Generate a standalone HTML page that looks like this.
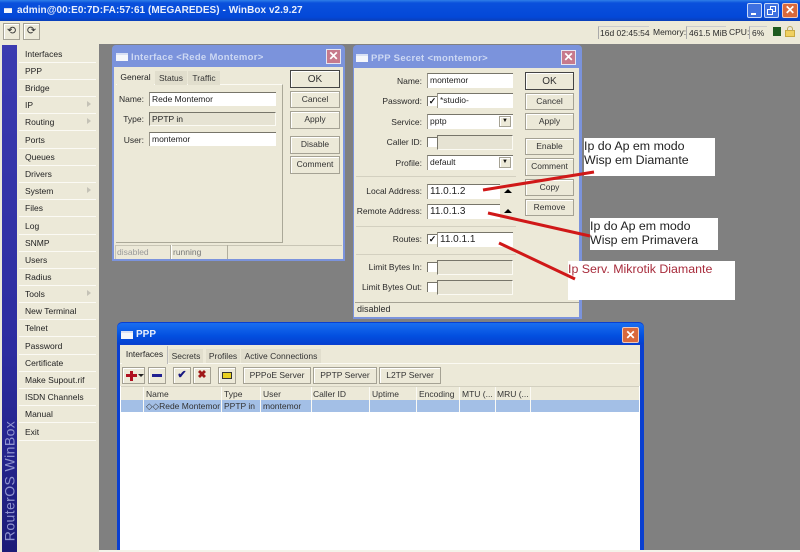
<!DOCTYPE html>
<html><head><meta charset="utf-8">
<style>
html,body{margin:0;padding:0}
body{width:800px;height:552px;overflow:hidden;position:relative;background:#ece9d8;font:8.5px "Liberation Sans",sans-serif;color:#222}
#w{left:0;top:0;width:800px;height:552px;filter:blur(.35px);overflow:hidden}
div{position:absolute;box-sizing:border-box}
.t{white-space:nowrap;font-size:8.5px;line-height:12px;color:#2a2a2a}
.r{text-align:right}
.m{left:25px;font-size:8.5px;line-height:12px;white-space:nowrap;color:#222}
.ms{left:19px;width:77px;height:1px;background:#fbfaf4}
.btn{background:#ece9d8;border:1px solid #a5a294;box-shadow:inset 1px 1px 0 #fff;text-align:center;font-size:8.5px;line-height:15px;color:#333}
.in{background:#fff;border-top:1px solid #77756a;border-left:1px solid #99968a;font-size:8.5px;line-height:13px;padding-left:2px;color:#222;white-space:nowrap}
.dis{background:#e6e3d3;border-top:1px solid #77756a;border-left:1px solid #77756a;border-bottom:1px solid #fbfaf3;border-right:1px solid #fbfaf3}
.cb{width:10px;height:10px;background:#fff;border-top:1px solid #77756a;border-left:1px solid #77756a;font-size:9px;line-height:9px;color:#111;text-align:center;font-weight:bold}
.tri{width:0;height:0;border-left:4px solid transparent;border-right:4px solid transparent;border-bottom:4px solid #000}
.sep{height:1px;background:#d3d0c0}
.tab{background:#e1decd;font-size:8.5px;line-height:14px;text-align:center;color:#333;white-space:nowrap}
.h{font-size:8.5px;line-height:12px;color:#333;white-space:nowrap}
.v{width:1px;background:#fbfaf4}
.note{background:#fff;font-size:12.4px;line-height:14px;color:#222;white-space:nowrap}
.wico{width:12px;height:8px;background:#f4f6fb;border-top:2px solid #d8e0f4}
.arrow{width:0;height:0;border-top:3px solid transparent;border-bottom:3px solid transparent;border-left:4px solid #c4c2b6;left:87px}
</style></head><body><div id="w">

<!-- main title -->
<div style="left:0;top:0;width:800px;height:21px;background:linear-gradient(#2f7fe8 0,#0a50dc 3px,#0348d8 17px,#0a3fb8 21px)"></div>
<div class="wico" style="left:4px;top:8px;width:8px;height:5px;border-top:1px solid #cfd8f0"></div>
<div style="left:17px;top:3px;font:bold 10px/15px 'Liberation Sans',sans-serif;color:#e8eefc;white-space:nowrap;letter-spacing:.05px">admin@00:E0:7D:FA:57:61 (MEGAREDES) - WinBox v2.9.27</div>
<div style="left:747px;top:3px;width:15px;height:15px;background:#3e70e0;border:1px solid #c8d8f8;border-radius:2px"><div style="left:3px;top:9px;width:5px;height:2px;background:#fff"></div></div>
<div style="left:764px;top:3px;width:15px;height:15px;background:#3e70e0;border:1px solid #c8d8f8;border-radius:2px"><div style="left:5px;top:2px;width:6px;height:6px;border:1px solid #fff"></div><div style="left:2px;top:5px;width:6px;height:6px;border:1px solid #fff;background:#3e70e0"></div></div>
<div style="left:782px;top:3px;width:16px;height:15px;background:#d9683c;border:1px solid #f0c8b8;border-radius:2px;color:#fff;font:bold 12px/13px 'Liberation Sans',sans-serif;text-align:center">✕</div>

<!-- toolbar -->
<div style="left:0;top:21px;width:800px;height:23px;background:#ece9d8"></div>
<div class="btn" style="left:3px;top:23px;width:17px;height:17px;line-height:14px;font-size:11px">⟲</div>
<div class="btn" style="left:23px;top:23px;width:17px;height:17px;line-height:14px;font-size:11px">⟳</div>
<div class="t" style="left:598px;top:26px;height:13px;border-left:1px solid #aaa;border-top:1px solid #ccc;padding-left:1px;line-height:12px;width:51px">16d 02:45:54</div>
<div class="t" style="left:653px;top:26px">Memory:</div>
<div class="t" style="left:686px;top:26px;border-left:1px solid #aaa;border-top:1px solid #ccc;width:40px;padding-left:2px">461.5 MiB</div>
<div class="t" style="left:729px;top:26px">CPU:</div>
<div class="t" style="left:749px;top:26px;border-left:1px solid #aaa;border-top:1px solid #ccc;width:18px;padding-left:2px">6%</div>
<div style="left:773px;top:27px;width:8px;height:9px;background:#1f5a1f"></div>
<div style="left:785px;top:30px;width:10px;height:7px;background:#f0d060;border:1px solid #c8a840"></div>
<div style="left:787px;top:26px;width:6px;height:5px;border:1px solid #b8a860;border-bottom:none;border-radius:3px 3px 0 0"></div>

<!-- sidebar -->
<div style="left:0;top:44px;width:2px;height:508px;background:#ece9d8"></div>
<div style="left:2px;top:45px;width:15px;height:507px;background:linear-gradient(#3b3bb0,#2c2ca0 60%,#1c1c78)"></div>
<div style="left:-53px;top:473px;width:125px;height:16px;transform:rotate(-90deg);font:14px/16px 'Liberation Sans',sans-serif;color:#8f93cf;white-space:nowrap;letter-spacing:.4px;text-align:center">RouterOS WinBox</div>

<div class="m" style="top:48px">Interfaces</div><div class="ms" style="top:62px"></div>
<div class="m" style="top:65px">PPP</div><div class="ms" style="top:79px"></div>
<div class="m" style="top:82px">Bridge</div><div class="ms" style="top:96px"></div>
<div class="m" style="top:99px">IP</div><div class="ms" style="top:113px"></div><div class="arrow" style="top:101px"></div>
<div class="m" style="top:116px">Routing</div><div class="ms" style="top:130px"></div><div class="arrow" style="top:118px"></div>
<div class="m" style="top:134px">Ports</div><div class="ms" style="top:148px"></div>
<div class="m" style="top:151px">Queues</div><div class="ms" style="top:165px"></div>
<div class="m" style="top:168px">Drivers</div><div class="ms" style="top:182px"></div>
<div class="m" style="top:185px">System</div><div class="ms" style="top:199px"></div><div class="arrow" style="top:187px"></div>
<div class="m" style="top:202px">Files</div><div class="ms" style="top:216px"></div>
<div class="m" style="top:220px">Log</div><div class="ms" style="top:234px"></div>
<div class="m" style="top:237px">SNMP</div><div class="ms" style="top:251px"></div>
<div class="m" style="top:254px">Users</div><div class="ms" style="top:268px"></div>
<div class="m" style="top:271px">Radius</div><div class="ms" style="top:285px"></div>
<div class="m" style="top:288px">Tools</div><div class="ms" style="top:302px"></div><div class="arrow" style="top:290px"></div>
<div class="m" style="top:305px">New Terminal</div><div class="ms" style="top:319px"></div>
<div class="m" style="top:322px">Telnet</div><div class="ms" style="top:336px"></div>
<div class="m" style="top:340px">Password</div><div class="ms" style="top:354px"></div>
<div class="m" style="top:357px">Certificate</div><div class="ms" style="top:371px"></div>
<div class="m" style="top:374px">Make Supout.rif</div><div class="ms" style="top:388px"></div>
<div class="m" style="top:391px">ISDN Channels</div><div class="ms" style="top:405px"></div>
<div class="m" style="top:408px">Manual</div><div class="ms" style="top:422px"></div>
<div class="m" style="top:426px">Exit</div><div class="ms" style="top:440px"></div>

<!-- MDI -->
<div style="left:99px;top:44px;width:701px;height:506px;background:#808080"></div>
<div style="left:99px;top:550px;width:701px;height:2px;background:#f4f3ea"></div>

<!-- Interface window -->
<div style="left:112px;top:45px;width:233px;height:216px;background:#7b93dc;border-radius:4px 4px 0 0"></div>
<div style="left:114px;top:67px;width:229px;height:192px;background:#ece9d8"></div>
<div class="wico" style="left:116px;top:53px"></div>
<div style="left:131px;top:50px;font:bold 9.5px/15px 'Liberation Sans',sans-serif;color:#cdd8f3;white-space:nowrap;letter-spacing:.3px">Interface &lt;Rede Montemor&gt;</div>
<div style="left:326px;top:49px;width:15px;height:15px;background:#c77a8c;border:1px solid #e6e6f0;color:#fff;font:bold 12px/13px 'Liberation Sans',sans-serif;text-align:center">✕</div>
<div style="left:116px;top:84px;width:167px;height:159px;border-right:1px solid #aaa898;border-bottom:1px solid #aaa898;border-top:1px solid #fbfaf3"></div>
<div class="tab" style="left:117px;top:70px;width:37px;height:15px;background:#ece9d8;color:#222">General</div>
<div class="tab" style="left:155px;top:71px;width:32px;height:14px">Status</div>
<div class="tab" style="left:188px;top:71px;width:32px;height:14px">Traffic</div>
<div class="t r" style="left:116px;top:93px;width:28px">Name:</div>
<div class="in" style="left:149px;top:92px;width:127px;height:14px">Rede Montemor</div>
<div class="t r" style="left:116px;top:113px;width:28px">Type:</div>
<div class="dis" style="left:149px;top:112px;width:127px;height:14px;font-size:8.5px;line-height:12px;padding-left:2px;white-space:nowrap">PPTP in</div>
<div class="t r" style="left:116px;top:134px;width:28px">User:</div>
<div class="in" style="left:149px;top:132px;width:127px;height:14px">montemor</div>
<div class="btn" style="left:290px;top:70px;width:50px;height:18px;border:1px solid #444;line-height:17px;font-size:10px">OK</div>
<div class="btn" style="left:290px;top:91px;width:50px;height:17px">Cancel</div>
<div class="btn" style="left:290px;top:111px;width:50px;height:18px">Apply</div>
<div class="btn" style="left:290px;top:136px;width:50px;height:18px">Disable</div>
<div class="btn" style="left:290px;top:156px;width:50px;height:18px">Comment</div>
<div style="left:115px;top:245px;width:227px;height:14px;border-top:1px solid #c8c5b5"></div>
<div style="left:115px;top:245px;width:56px;height:14px;border-right:1px solid #b0ad9d;border-left:1px solid #c8c5b5;font-size:8.5px;line-height:14px;color:#999;padding-left:1px">disabled</div>
<div style="left:171px;top:245px;width:57px;height:14px;border-left:1px solid #fff;border-right:1px solid #b0ad9d;font-size:8.5px;line-height:14px;color:#777;padding-left:1px">running</div>

<!-- PPP Secret window -->
<div style="left:353px;top:45px;width:229px;height:274px;background:#7b93dc;border-radius:4px 4px 0 0"></div>
<div style="left:354px;top:68px;width:225px;height:249px;background:#ece9d8"></div>
<div class="wico" style="left:356px;top:54px"></div>
<div style="left:371px;top:51px;font:bold 9.5px/15px 'Liberation Sans',sans-serif;color:#cdd8f3;white-space:nowrap;letter-spacing:.3px">PPP Secret &lt;montemor&gt;</div>
<div style="left:561px;top:50px;width:15px;height:15px;background:#c77a8c;border:1px solid #e6e6f0;color:#fff;font:bold 12px/13px 'Liberation Sans',sans-serif;text-align:center">✕</div>

<div class="t r" style="left:355px;top:75px;width:67px">Name:</div>
<div class="in" style="left:427px;top:73px;width:86px;height:15px">montemor</div>
<div class="t r" style="left:355px;top:95px;width:67px">Password:</div>
<div class="cb" style="left:427px;top:96px">✓</div>
<div class="in" style="left:437px;top:93px;width:76px;height:15px">*studio-</div>
<div class="t r" style="left:355px;top:116px;width:67px">Service:</div>
<div class="in" style="left:427px;top:114px;width:86px;height:15px">pptp</div>
<div class="btn" style="left:499px;top:116px;width:12px;height:11px;font-size:6px;line-height:9px;color:#111">▼</div>
<div class="t r" style="left:355px;top:136px;width:67px">Caller ID:</div>
<div class="cb" style="left:427px;top:137px"></div>
<div class="dis" style="left:437px;top:135px;width:76px;height:15px"></div>
<div class="t r" style="left:355px;top:157px;width:67px">Profile:</div>
<div class="in" style="left:427px;top:155px;width:86px;height:15px">default</div>
<div class="btn" style="left:499px;top:157px;width:12px;height:11px;font-size:6px;line-height:9px;color:#111">▼</div>
<div class="sep" style="left:356px;top:176px;width:160px"></div>
<div class="t r" style="left:355px;top:185px;width:67px">Local Address:</div>
<div class="in" style="left:427px;top:184px;width:73px;height:15px;font-size:10px">11.0.1.2</div>
<div class="tri" style="left:504px;top:189px"></div>
<div class="t r" style="left:355px;top:205px;width:67px">Remote Address:</div>
<div class="in" style="left:427px;top:204px;width:73px;height:15px;font-size:10px">11.0.1.3</div>
<div class="tri" style="left:504px;top:209px"></div>
<div class="sep" style="left:356px;top:226px;width:160px"></div>
<div class="t r" style="left:355px;top:233px;width:67px">Routes:</div>
<div class="cb" style="left:427px;top:234px">✓</div>
<div class="in" style="left:437px;top:232px;width:76px;height:15px;font-size:10px">11.0.1.1</div>
<div class="sep" style="left:356px;top:254px;width:160px"></div>
<div class="t r" style="left:355px;top:261px;width:67px">Limit Bytes In:</div>
<div class="cb" style="left:427px;top:262px"></div>
<div class="dis" style="left:437px;top:260px;width:76px;height:15px"></div>
<div class="t r" style="left:355px;top:281px;width:67px">Limit Bytes Out:</div>
<div class="cb" style="left:427px;top:282px"></div>
<div class="dis" style="left:437px;top:280px;width:76px;height:15px"></div>
<div style="left:355px;top:302px;width:224px;height:1px;background:#a5a294"></div>
<div class="t" style="left:357px;top:303px;font-size:9px">disabled</div>

<div class="btn" style="left:525px;top:72px;width:49px;height:18px;border:1px solid #444;line-height:17px;font-size:10px">OK</div>
<div class="btn" style="left:525px;top:93px;width:49px;height:17px">Cancel</div>
<div class="btn" style="left:525px;top:113px;width:49px;height:17px">Apply</div>
<div class="btn" style="left:525px;top:138px;width:49px;height:17px">Enable</div>
<div class="btn" style="left:525px;top:158px;width:49px;height:18px">Comment</div>
<div class="btn" style="left:525px;top:179px;width:49px;height:17px">Copy</div>
<div class="btn" style="left:525px;top:199px;width:49px;height:17px">Remove</div>

<!-- Notes -->
<div class="note" style="left:584px;top:138px;width:131px;height:38px;padding-top:1px">Ip do Ap em modo<br>Wisp em Diamante</div>
<div class="note" style="left:590px;top:218px;width:128px;height:32px;padding-top:1px">Ip do Ap em modo<br>Wisp em Primavera</div>
<div class="note" style="left:568px;top:261px;width:167px;height:39px;color:#a82c3c;padding-top:1px">Ip Serv. Mikrotik Diamante</div>

<svg style="position:absolute;left:0;top:0" width="800" height="552">
<path d="M483 190L594 172M488 213L590 236M499 243L575 279" stroke="#d01818" stroke-width="3" fill="none"/>
</svg>

<!-- PPP window -->
<div style="left:117px;top:322px;width:527px;height:228px;background:#0a3fd0;border-radius:5px 5px 0 0"></div>
<div style="left:117px;top:323px;width:527px;height:21px;background:linear-gradient(#1a6ef0,#0350e0 60%,#0440d0);border-radius:5px 5px 0 0"></div>
<div class="wico" style="left:121px;top:331px"></div>
<div style="left:136px;top:327px;font:bold 10px/15px 'Liberation Sans',sans-serif;color:#e8eefc">PPP</div>
<div style="left:622px;top:327px;width:17px;height:16px;background:#d9683c;border:1px solid #f0c8b8;border-radius:2px;color:#fff;font:bold 12px/14px 'Liberation Sans',sans-serif;text-align:center">✕</div>
<div style="left:120px;top:345px;width:520px;height:205px;background:#fff"></div>
<div style="left:120px;top:345px;width:520px;height:41px;background:#ece9d8"></div>
<div style="left:120px;top:363px;width:520px;height:1px;background:#fbfaf3"></div>
<div class="tab" style="left:122px;top:346px;width:46px;height:18px;background:#ece9d8;line-height:16px;color:#222;border-right:1px solid #bbb">Interfaces</div>
<div class="tab" style="left:169px;top:349px;width:34px;height:14px">Secrets</div>
<div class="tab" style="left:206px;top:349px;width:34px;height:14px">Profiles</div>
<div class="tab" style="left:241px;top:349px;width:80px;height:14px">Active Connections</div>

<div class="btn" style="left:122px;top:367px;width:23px;height:17px"></div>
<div style="left:126px;top:374px;width:11px;height:3px;background:#b01020"></div>
<div style="left:130px;top:371px;width:3px;height:10px;background:#b01020"></div>
<div style="left:138px;top:374px;width:0;height:0;border-left:3px solid transparent;border-right:3px solid transparent;border-top:3px solid #222"></div>
<div class="btn" style="left:148px;top:367px;width:18px;height:17px"></div>
<div style="left:152px;top:374px;width:10px;height:3px;background:#202090"></div>
<div class="btn" style="left:173px;top:367px;width:18px;height:17px;color:#181880;font-size:11px;font-weight:bold;line-height:15px">✔</div>
<div class="btn" style="left:193px;top:367px;width:18px;height:17px;color:#a01818;font-size:11px;font-weight:bold;line-height:15px">✖</div>
<div class="btn" style="left:218px;top:367px;width:18px;height:17px"></div>
<div style="left:222px;top:372px;width:10px;height:7px;background:#e8d020;border:1px solid #333"></div>
<div class="btn" style="left:243px;top:367px;width:68px;height:17px">PPPoE Server</div>
<div class="btn" style="left:313px;top:367px;width:64px;height:17px">PPTP Server</div>
<div class="btn" style="left:379px;top:367px;width:62px;height:17px">L2TP Server</div>

<div style="left:121px;top:386px;width:518px;height:14px;background:#ece9d8;border-top:1px solid #d3d0c0"></div>
<div style="left:121px;top:400px;width:518px;height:12px;background:#a3bfe6"></div>
<div class="h" style="left:146px;top:388px">Name</div>
<div class="h" style="left:224px;top:388px">Type</div>
<div class="h" style="left:263px;top:388px">User</div>
<div class="h" style="left:313px;top:388px">Caller ID</div>
<div class="h" style="left:372px;top:388px">Uptime</div>
<div class="h" style="left:419px;top:388px">Encoding</div>
<div class="h" style="left:462px;top:388px">MTU (...</div>
<div class="h" style="left:497px;top:388px">MRU (...</div>
<div class="h" style="left:146px;top:400px;width:74px;overflow:hidden">◇◇Rede Montemor</div>
<div class="h" style="left:224px;top:400px">PPTP in</div>
<div class="h" style="left:263px;top:400px">montemor</div>
<div class="v" style="left:143px;top:387px;height:25px"></div>
<div class="v" style="left:221px;top:387px;height:25px"></div>
<div class="v" style="left:260px;top:387px;height:25px"></div>
<div class="v" style="left:311px;top:387px;height:25px"></div>
<div class="v" style="left:369px;top:387px;height:25px"></div>
<div class="v" style="left:416px;top:387px;height:25px"></div>
<div class="v" style="left:459px;top:387px;height:25px"></div>
<div class="v" style="left:495px;top:387px;height:25px"></div>
<div class="v" style="left:530px;top:387px;height:25px"></div>

</div></body></html>
